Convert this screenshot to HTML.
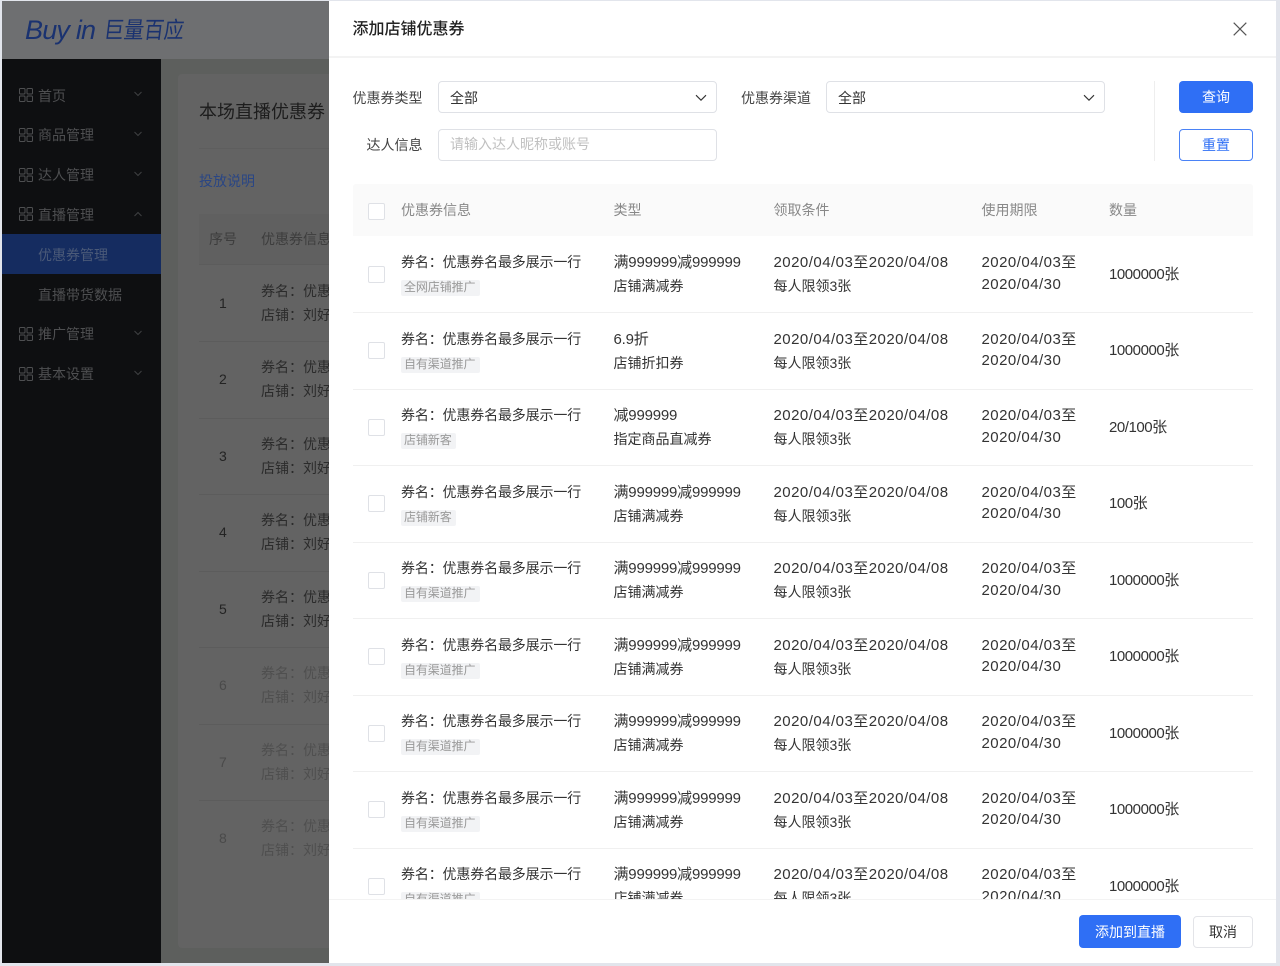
<!DOCTYPE html>
<html lang="zh-CN"><head><meta charset="utf-8"><title>添加店铺优惠券</title>
<style>
*{box-sizing:border-box}
html,body{margin:0;padding:0;width:1280px;height:966px;overflow:hidden;background:#e2e5ec}
body{font-family:"Liberation Sans","Noto Sans CJK SC",sans-serif;font-size:14px;color:#333;position:relative}
#wrap{position:absolute;inset:0;filter:blur(.3px)}
.a,.t{position:absolute}
.t{white-space:nowrap;line-height:20px;height:20px}
svg{position:absolute;display:block}
#bg{position:absolute;left:2px;top:1px;width:327px;height:962px;overflow:hidden;background:#5d5f5d}
#logo{position:absolute;left:0;top:0;width:327px;height:58px;background:#6e6f71}
#side{position:absolute;left:0;top:58px;width:159px;height:904px;background:#0e0f11}
.m{color:#4e4f51;left:36px}
#card{position:absolute;left:176px;top:73px;width:160px;height:874px;background:#636363;border-radius:4px}
#modal{position:absolute;left:329px;top:1px;width:947px;height:962px;background:#fff}
.box{position:absolute;background:#fff;border:1px solid #dfe1e6;border-radius:4px;height:32px}
.lab{color:#444}
.th{color:#888;top:199px}
#list{position:absolute;left:353px;top:236px;width:900px;height:663px;overflow:hidden}
.r{position:absolute;left:0;width:900px;height:77px;border-bottom:1px solid #f0f0f0}
.c{position:absolute;left:15px;top:29.5px;width:17px;height:17px;border:1px solid #dfe1e6;border-radius:2px;background:#fff}
.tag{position:absolute;left:47.5px;top:44px;height:16px;line-height:15px;padding:0 4.5px 0 3.5px;font-size:12px;letter-spacing:-.1px;color:#999;background:#f2f3f5;border-radius:2px;white-space:nowrap}
.l1{top:16px}.l2{top:40px}.d2{top:38.5px}.q{left:756px;top:28.5px;font-size:15px;letter-spacing:-.45px}
.x1{left:48px;letter-spacing:-.15px}.x2{left:260.5px}.x3{left:420.5px}.x4{left:628.5px}
.n{font-size:15px;letter-spacing:-.2px}.dt{font-size:15px;letter-spacing:.47px}
.l1.n,.l1.dt{top:17px}
.bn{position:absolute;border-radius:4px;text-align:center}
.ic{fill:none;stroke:#4e4f51}
</style></head><body><div id="wrap">

<div id="bg">
<div id="logo">
<div class="t" style="left:23px;top:12px;height:34px;line-height:34px;font-size:27px;color:#1a3270;font-style:italic;letter-spacing:-.8px">Buy in</div>
<div class="t" style="left:102px;top:13px;height:34px;line-height:34px;font-size:20px;color:#1a3270;letter-spacing:0;transform:scaleY(1.15) skewX(-8deg);transform-origin:left center">巨量百应</div>
</div>
<div id="side">
<div class="a" style="left:0;top:175px;width:159px;height:40px;background:#152c60"></div>

<svg style="left:17px;top:29px" width="14" height="14" viewBox="0 0 14 14" class="ic"><rect x=".5" y=".5" width="5.5" height="5.5" rx="1"/><rect x="8" y=".5" width="5.5" height="5.5" rx="1"/><rect x=".5" y="8" width="5.5" height="5.5" rx="1"/><rect x="8" y="8" width="5.5" height="5.5" rx="1"/></svg>
<div class="t m" style="top:27px">首页</div>
<svg style="left:132px;top:32px" width="8" height="6" viewBox="0 0 8 6" fill="none" stroke="#3f4042"><path d="M.5 1L4 4.5 7.5 1"/></svg>

<svg style="left:17px;top:69px" width="14" height="14" viewBox="0 0 14 14" class="ic"><rect x=".5" y=".5" width="5.5" height="5.5" rx="1"/><rect x="8" y=".5" width="5.5" height="5.5" rx="1"/><rect x=".5" y="8" width="5.5" height="5.5" rx="1"/><rect x="8" y="8" width="5.5" height="5.5" rx="1"/></svg>
<div class="t m" style="top:66px">商品管理</div>
<svg style="left:132px;top:72px" width="8" height="6" viewBox="0 0 8 6" fill="none" stroke="#3f4042"><path d="M.5 1L4 4.5 7.5 1"/></svg>

<svg style="left:17px;top:109px" width="14" height="14" viewBox="0 0 14 14" class="ic"><rect x=".5" y=".5" width="5.5" height="5.5" rx="1"/><rect x="8" y=".5" width="5.5" height="5.5" rx="1"/><rect x=".5" y="8" width="5.5" height="5.5" rx="1"/><rect x="8" y="8" width="5.5" height="5.5" rx="1"/></svg>
<div class="t m" style="top:106px">达人管理</div>
<svg style="left:132px;top:112px" width="8" height="6" viewBox="0 0 8 6" fill="none" stroke="#3f4042"><path d="M.5 1L4 4.5 7.5 1"/></svg>

<svg style="left:17px;top:148px" width="14" height="14" viewBox="0 0 14 14" class="ic"><rect x=".5" y=".5" width="5.5" height="5.5" rx="1"/><rect x="8" y=".5" width="5.5" height="5.5" rx="1"/><rect x=".5" y="8" width="5.5" height="5.5" rx="1"/><rect x="8" y="8" width="5.5" height="5.5" rx="1"/></svg>
<div class="t m" style="top:146px">直播管理</div>
<svg style="left:132px;top:152px" width="8" height="6" viewBox="0 0 8 6" fill="none" stroke="#3f4042"><path d="M.5 5L4 1.5 7.5 5"/></svg>

<div class="t m" style="top:186px;color:#4b5a78">优惠券管理</div>
<div class="t m" style="top:226px">直播带货数据</div>

<svg style="left:17px;top:268px" width="14" height="14" viewBox="0 0 14 14" class="ic"><rect x=".5" y=".5" width="5.5" height="5.5" rx="1"/><rect x="8" y=".5" width="5.5" height="5.5" rx="1"/><rect x=".5" y="8" width="5.5" height="5.5" rx="1"/><rect x="8" y="8" width="5.5" height="5.5" rx="1"/></svg>
<div class="t m" style="top:265px">推广管理</div>
<svg style="left:132px;top:271px" width="8" height="6" viewBox="0 0 8 6" fill="none" stroke="#3f4042"><path d="M.5 1L4 4.5 7.5 1"/></svg>

<svg style="left:17px;top:308px" width="14" height="14" viewBox="0 0 14 14" class="ic"><rect x=".5" y=".5" width="5.5" height="5.5" rx="1"/><rect x="8" y=".5" width="5.5" height="5.5" rx="1"/><rect x=".5" y="8" width="5.5" height="5.5" rx="1"/><rect x="8" y="8" width="5.5" height="5.5" rx="1"/></svg>
<div class="t m" style="top:305px">基本设置</div>
<svg style="left:132px;top:311px" width="8" height="6" viewBox="0 0 8 6" fill="none" stroke="#3f4042"><path d="M.5 1L4 4.5 7.5 1"/></svg>
</div>

<div id="card">
<div class="t" style="left:21px;top:26px;font-size:18px;height:24px;line-height:24px;color:#1d1d1d">本场直播优惠券</div>
<div class="a" style="left:21px;top:74px;width:139px;height:1px;background:#5e5e5e"></div>
<div class="t" style="left:21px;top:97px;color:#2a4684">投放说明</div>
<div class="a" style="left:21px;top:140px;width:139px;height:51px;background:#606060"></div>
<div class="t" style="left:31px;top:155px;color:#3d3d3d">序号</div>
<div class="t" style="left:83px;top:155px;color:#3d3d3d">优惠券信息</div>

<div class="a" style="left:21px;top:190px;width:139px;height:1px;background:#5c5c5c"></div>
<div class="a" style="left:21px;top:267px;width:139px;height:1px;background:#5c5c5c"></div>
<div class="a" style="left:21px;top:344px;width:139px;height:1px;background:#5c5c5c"></div>
<div class="a" style="left:21px;top:420px;width:139px;height:1px;background:#5c5c5c"></div>
<div class="a" style="left:21px;top:497px;width:139px;height:1px;background:#5c5c5c"></div>
<div class="a" style="left:21px;top:573px;width:139px;height:1px;background:#5c5c5c"></div>
<div class="a" style="left:21px;top:650px;width:139px;height:1px;background:#5c5c5c"></div>
<div class="a" style="left:21px;top:726px;width:139px;height:1px;background:#5c5c5c"></div>

<div class="t" style="left:41px;top:219px;color:#232323">1</div><div class="t" style="left:83px;top:207px;color:#2b2b2b">券名：优惠</div><div class="t" style="left:83px;top:231px;color:#2b2b2b">店铺：刘好</div>
<div class="t" style="left:41px;top:295px;color:#232323">2</div><div class="t" style="left:83px;top:283px;color:#2b2b2b">券名：优惠</div><div class="t" style="left:83px;top:307px;color:#2b2b2b">店铺：刘好</div>
<div class="t" style="left:41px;top:372px;color:#232323">3</div><div class="t" style="left:83px;top:360px;color:#2b2b2b">券名：优惠</div><div class="t" style="left:83px;top:384px;color:#2b2b2b">店铺：刘好</div>
<div class="t" style="left:41px;top:448px;color:#232323">4</div><div class="t" style="left:83px;top:436px;color:#2b2b2b">券名：优惠</div><div class="t" style="left:83px;top:460px;color:#2b2b2b">店铺：刘好</div>
<div class="t" style="left:41px;top:525px;color:#232323">5</div><div class="t" style="left:83px;top:513px;color:#2b2b2b">券名：优惠</div><div class="t" style="left:83px;top:537px;color:#2b2b2b">店铺：刘好</div>
<div class="t" style="left:41px;top:601px;color:#4a4a4a">6</div><div class="t" style="left:83px;top:589px;color:#4f4f4f">券名：优惠</div><div class="t" style="left:83px;top:613px;color:#4f4f4f">店铺：刘好</div>
<div class="t" style="left:41px;top:678px;color:#4a4a4a">7</div><div class="t" style="left:83px;top:666px;color:#4f4f4f">券名：优惠</div><div class="t" style="left:83px;top:690px;color:#4f4f4f">店铺：刘好</div>
<div class="t" style="left:41px;top:754px;color:#4a4a4a">8</div><div class="t" style="left:83px;top:742px;color:#4f4f4f">券名：优惠</div><div class="t" style="left:83px;top:766px;color:#4f4f4f">店铺：刘好</div>
</div>
</div>

<div id="modal">
<div class="t" style="left:23.5px;top:18px;font-size:16px;height:22px;line-height:22px;font-weight:500;color:#222">添加店铺优惠券</div>
<svg style="left:904px;top:21px" width="14" height="14" viewBox="0 0 14 14" fill="none" stroke="#555" stroke-width="1.2"><path d="M.7.7l12.6 12.6M13.3.7L.7 13.3"/></svg>
<div class="a" style="left:0;top:55px;width:947px;height:2px;background:#f3f3f3"></div>

<div class="t lab" style="left:23.5px;top:87px">优惠券类型</div>
<div class="box" style="left:109px;top:80px;width:279px"></div>
<div class="t" style="left:121px;top:87px">全部</div>
<svg style="left:366px;top:93px" width="12" height="8" viewBox="0 0 12 8" fill="none" stroke="#333" stroke-width="1.1"><path d="M1 1.2l5 5 5-5"/></svg>

<div class="t lab" style="left:412px;top:87px">优惠券渠道</div>
<div class="box" style="left:497px;top:80px;width:279px"></div>
<div class="t" style="left:509px;top:87px">全部</div>
<svg style="left:754px;top:93px" width="12" height="8" viewBox="0 0 12 8" fill="none" stroke="#333" stroke-width="1.1"><path d="M1 1.2l5 5 5-5"/></svg>

<div class="t lab" style="left:37.5px;top:134px">达人信息</div>
<div class="box" style="left:109px;top:128px;width:279px"></div>
<div class="t" style="left:121px;top:133px;color:#c0c0c0">请输入达人昵称或账号</div>

<div class="a" style="left:825px;top:80px;width:1px;height:80px;background:#eeeeee"></div>
<div class="bn" style="left:850px;top:80px;width:74px;height:32px;line-height:32px;background:#2f6ff5;color:#fff">查询</div>
<div class="bn" style="left:850px;top:128px;width:74px;height:32px;line-height:30px;background:#fff;border:1px solid #4a82f6;color:#2f6ff5">重置</div>

<div class="a" style="left:24px;top:183px;width:900px;height:52px;background:#fafafa;border-radius:3px 3px 0 0"></div>
<div class="c" style="left:39px;top:201.5px"></div>
<div class="t th" style="left:72px">优惠券信息</div>
<div class="t th" style="left:284.5px">类型</div>
<div class="t th" style="left:444.5px">领取条件</div>
<div class="t th" style="left:652.5px">使用期限</div>
<div class="t th" style="left:780px">数量</div>
</div>

<div id="list">
<div class="r" style="top:0"><div class="c"></div><div class="t x1 l1">券名：优惠券名最多展示一行</div><div class="tag">全网店铺推广</div><div class="t x2 l1 n">满999999减999999</div><div class="t x2 l2">店铺满减券</div><div class="t x3 l1 dt">2020/04/03至2020/04/08</div><div class="t x3 l2">每人限领3张</div><div class="t x4 l1 dt">2020/04/03至</div><div class="t x4 d2 dt">2020/04/30</div><div class="t q">1000000张</div></div>
<div class="r" style="top:76.5px"><div class="c"></div><div class="t x1 l1">券名：优惠券名最多展示一行</div><div class="tag">自有渠道推广</div><div class="t x2 l1 n">6.9折</div><div class="t x2 l2">店铺折扣券</div><div class="t x3 l1 dt">2020/04/03至2020/04/08</div><div class="t x3 l2">每人限领3张</div><div class="t x4 l1 dt">2020/04/03至</div><div class="t x4 d2 dt">2020/04/30</div><div class="t q">1000000张</div></div>
<div class="r" style="top:153px"><div class="c"></div><div class="t x1 l1">券名：优惠券名最多展示一行</div><div class="tag">店铺新客</div><div class="t x2 l1 n">减999999</div><div class="t x2 l2">指定商品直减券</div><div class="t x3 l1 dt">2020/04/03至2020/04/08</div><div class="t x3 l2">每人限领3张</div><div class="t x4 l1 dt">2020/04/03至</div><div class="t x4 d2 dt">2020/04/30</div><div class="t q">20/100张</div></div>
<div class="r" style="top:229.5px"><div class="c"></div><div class="t x1 l1">券名：优惠券名最多展示一行</div><div class="tag">店铺新客</div><div class="t x2 l1 n">满999999减999999</div><div class="t x2 l2">店铺满减券</div><div class="t x3 l1 dt">2020/04/03至2020/04/08</div><div class="t x3 l2">每人限领3张</div><div class="t x4 l1 dt">2020/04/03至</div><div class="t x4 d2 dt">2020/04/30</div><div class="t q">100张</div></div>
<div class="r" style="top:306px"><div class="c"></div><div class="t x1 l1">券名：优惠券名最多展示一行</div><div class="tag">自有渠道推广</div><div class="t x2 l1 n">满999999减999999</div><div class="t x2 l2">店铺满减券</div><div class="t x3 l1 dt">2020/04/03至2020/04/08</div><div class="t x3 l2">每人限领3张</div><div class="t x4 l1 dt">2020/04/03至</div><div class="t x4 d2 dt">2020/04/30</div><div class="t q">1000000张</div></div>
<div class="r" style="top:382.5px"><div class="c"></div><div class="t x1 l1">券名：优惠券名最多展示一行</div><div class="tag">自有渠道推广</div><div class="t x2 l1 n">满999999减999999</div><div class="t x2 l2">店铺满减券</div><div class="t x3 l1 dt">2020/04/03至2020/04/08</div><div class="t x3 l2">每人限领3张</div><div class="t x4 l1 dt">2020/04/03至</div><div class="t x4 d2 dt">2020/04/30</div><div class="t q">1000000张</div></div>
<div class="r" style="top:459px"><div class="c"></div><div class="t x1 l1">券名：优惠券名最多展示一行</div><div class="tag">自有渠道推广</div><div class="t x2 l1 n">满999999减999999</div><div class="t x2 l2">店铺满减券</div><div class="t x3 l1 dt">2020/04/03至2020/04/08</div><div class="t x3 l2">每人限领3张</div><div class="t x4 l1 dt">2020/04/03至</div><div class="t x4 d2 dt">2020/04/30</div><div class="t q">1000000张</div></div>
<div class="r" style="top:535.5px"><div class="c"></div><div class="t x1 l1">券名：优惠券名最多展示一行</div><div class="tag">自有渠道推广</div><div class="t x2 l1 n">满999999减999999</div><div class="t x2 l2">店铺满减券</div><div class="t x3 l1 dt">2020/04/03至2020/04/08</div><div class="t x3 l2">每人限领3张</div><div class="t x4 l1 dt">2020/04/03至</div><div class="t x4 d2 dt">2020/04/30</div><div class="t q">1000000张</div></div>
<div class="r" style="top:612px;border:0"><div class="c"></div><div class="t x1 l1">券名：优惠券名最多展示一行</div><div class="tag">自有渠道推广</div><div class="t x2 l1 n">满999999减999999</div><div class="t x2 l2">店铺满减券</div><div class="t x3 l1 dt">2020/04/03至2020/04/08</div><div class="t x3 l2">每人限领3张</div><div class="t x4 l1 dt">2020/04/03至</div><div class="t x4 d2 dt">2020/04/30</div><div class="t q">1000000张</div></div>
</div>

<div class="a" style="left:329px;top:899px;width:947px;height:1px;background:#f3f3f3"></div>
<div class="bn" style="left:1079px;top:915px;width:102px;height:33px;line-height:34px;background:#2f6ff5;color:#fff">添加到直播</div>
<div class="bn" style="left:1193px;top:916px;width:60px;height:32px;line-height:30px;background:#fff;border:1px solid #e3e4e8;color:#333">取消</div>

</div></body></html>
